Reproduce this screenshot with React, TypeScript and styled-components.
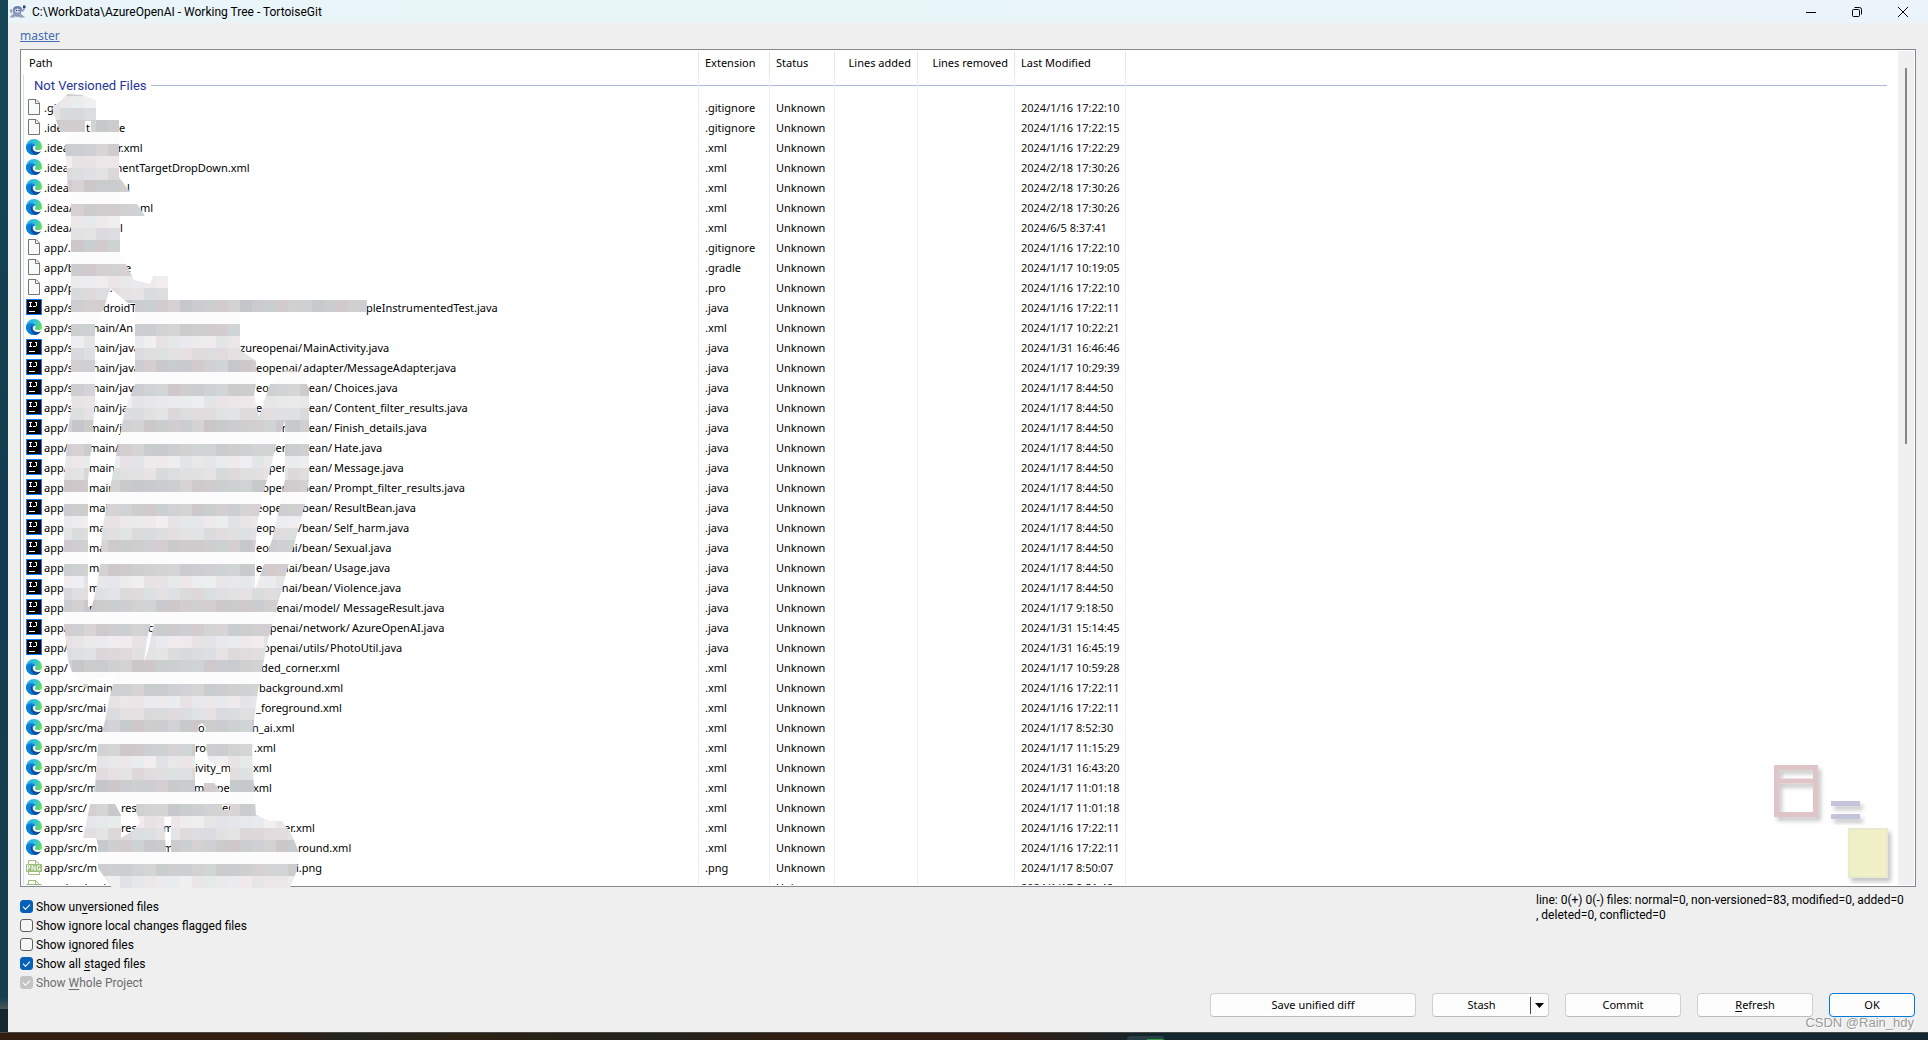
import React from 'react';
import styled, { createGlobalStyle } from 'styled-components';

const UI_FONT = '"Noto Sans", "Open Sans", sans-serif';
const LABEL_FONT = 'Roboto, "Noto Sans", sans-serif';

const GlobalStyle = createGlobalStyle`
  *, *::before, *::after { box-sizing: border-box; }
  html, body { margin: 0; padding: 0; }
  body { font-family: ${UI_FONT}; font-size: 11px; color: #000; }
`;

const Desktop = styled.div`
  min-height: 100vh;
  height: 100vh;
  padding-left: 8px;
  display: flex;
  flex-direction: column;
  background: linear-gradient(#174558 0%, #123c4e 50%, #173f50 96%, #4b5558 97%, #14272f 97%);
`;

const Dialog = styled.main`
  position: relative;
  flex: 1;
  min-height: 0;
  display: flex;
  flex-direction: column;
  background: #efefef;
`;

const TitleBar = styled.header`
  flex: none;
  height: 23px;
  padding: 0 2px;
  display: flex;
  align-items: center;
  background: linear-gradient(90deg, #eaf4f9, #e8f6f7 30%, #eaf4fa);
`;

const Title = styled.h1`
  flex: 1;
  margin: 0 0 0 6px;
  font-family: ${LABEL_FONT};
  font-size: 12px;
  line-height: 20px;
  font-weight: 400;
`;

const WindowButton = styled.button`
  width: 46px;
  height: 20px;
  padding: 0;
  border: 0;
  background: transparent;
  display: grid;
  place-items: center;
`;

const BranchBar = styled.nav`
  flex: none;
  height: 26px;
  padding: 0 12px;
  display: flex;
  align-items: center;
`;

const BranchLink = styled.a`
  font-size: 12px;
  line-height: 20px;
  color: #426eb4;
  text-decoration: underline;
`;

const ListFrame = styled.section`
  position: relative;
  flex: 1;
  min-height: 0;
  margin: 0 12px;
  padding: 1px 1px 1px 2px;
  display: flex;
  border: 1px solid #828790;
  background: #fff;
`;

const ListView = styled.div`
  flex: 1;
  min-width: 0;
  overflow: hidden;
`;

const FileTable = styled.table`
  width: 100%;
  table-layout: fixed;
  border-collapse: separate;
  border-spacing: 0;
  th, td { padding: 0; font-weight: 400; text-align: left; }
`;

const Col = styled.col<{ $w?: number }>`
  width: ${p => (p.$w ? `${p.$w}px` : 'auto')};
`;

const HeadCell = styled.th<{ $right?: boolean; $last?: boolean }>`
  && {
    height: 24px;
    padding: 0 6px;
    font-size: 11px;
    line-height: 20px;
    text-align: ${p => (p.$right ? 'right' : 'left')};
    border-right: ${p => (p.$last ? '0' : '1px solid #e5e5e5')};
  }
`;

const Cell = styled.td<{ $first?: boolean; $last?: boolean }>`
  border-left: ${p => (p.$first ? '1px solid #cfe0f7' : '0')};
  border-right: ${p => (p.$last ? '0' : '1px solid #e9f2fc')};
`;

const CellText = styled.div`
  height: 20px;
  padding-left: 6px;
  line-height: 20px;
  white-space: nowrap;
`;

const DateText = styled(CellText)`
  font-family: "Open Sans", "Noto Sans", sans-serif;
`;

const PathText = styled(CellText)`
  padding-left: 2px;
  display: flex;
  align-items: center;
  gap: 2px;
  > svg { margin-bottom: 2px; }
`;

const Piece = styled.span<{ $w: number }>`
  flex: none;
  width: ${p => (p.$w ? `${p.$w}px` : 'auto')};
`;

const Pieces = styled.span`
  display: flex;
`;

const GroupCell = styled.div<{ $first?: boolean; $last?: boolean }>`
  height: 23px;
  padding: 0 ${p => (p.$last ? '11px' : '0')} 2px ${p => (p.$first ? '10px' : '0')};
  display: flex;
  align-items: center;
  gap: 4px;
`;

const GroupLabel = styled.span`
  font-family: ${LABEL_FONT};
  font-size: 13px;
  line-height: 20px;
  color: #26349a;
`;

const Rule = styled.span`
  flex: 1;
  height: 1px;
  background: #acbbda;
`;

const ScrollTrack = styled.div`
  flex: none;
  width: 16px;
  padding: 17px 7px 0;
  background: #f0f0f0;
`;

const ScrollThumb = styled.div`
  height: 46%;
  width: 2px;
  background: #858585;
`;

const Redaction = styled.svg`
  position: absolute;
  left: 27px;
  top: 42px;
  pointer-events: none;
`;

const CornerArt = styled.svg`
  position: absolute;
  right: 21px;
  bottom: 2px;
  pointer-events: none;
`;

const Footer = styled.footer`
  flex: none;
  padding: 6px 13px 15px 12px;
`;

const Options = styled.div`
  display: flex;
  justify-content: space-between;
  align-items: flex-start;
`;

const CheckList = styled.div`
  padding: 4px 0 1px;
`;

const Option = styled.label<{ $off?: boolean }>`
  height: 19px;
  display: flex;
  align-items: center;
  gap: 3px;
  font-family: ${LABEL_FONT};
  font-size: 12px;
  line-height: 18px;
  color: ${p => (p.$off ? '#6d6d6d' : '#000')};
`;

const Check = styled.input`
  appearance: none;
  width: 13px;
  height: 13px;
  margin: 0;
  display: grid;
  place-items: center;
  border: 1px solid #5f5f5f;
  border-radius: 3px;
  background: #f5f5f5;
  &:checked { background: #0560b8; border-color: #0560b8; }
  &:disabled { background: #c4c4c4; border-color: #c4c4c4; }
  &:checked::after {
    content: '';
    width: 7px;
    height: 4px;
    border: solid #fff;
    border-width: 0 0 1px 1px;
    transform: translateY(-1px) rotate(-45deg);
  }
`;

const Key = styled.u`
  text-underline-offset: 2px;
`;

const Summary = styled.p`
  margin: 0;
  width: 379px;
  font-family: ${LABEL_FONT};
  font-size: 12px;
  line-height: 15px;
  white-space: nowrap;
`;

const Actions = styled.div`
  display: flex;
  justify-content: flex-end;
  gap: 16px;
`;

const Button = styled.button<{ $w: number; $primary?: boolean }>`
  width: ${p => p.$w}px;
  height: 24px;
  padding: 0;
  font-family: ${UI_FONT};
  font-size: 11px;
  line-height: 20px;
  color: #000;
  background: #fdfdfd;
  border: 1px solid ${p => (p.$primary ? '#0078d4' : '#d0d0d0')};
  border-bottom-color: ${p => (p.$primary ? '#0078d4' : '#bbb')};
  border-radius: 4px;
`;

const SplitButton = styled.div`
  display: flex;
  height: 24px;
  background: #fdfdfd;
  border: 1px solid #d0d0d0;
  border-bottom-color: #bbb;
  border-radius: 4px;
  align-items: center;
`;

const SplitPart = styled.button<{ $w: number; $divided?: boolean }>`
  width: ${p => p.$w}px;
  height: 17px;
  padding: 0;
  display: grid;
  place-items: center;
  border: 0;
  border-left: ${p => (p.$divided ? '1px solid #444' : '0')};
  background: transparent;
  font-family: ${UI_FONT};
  font-size: 11px;
  line-height: 16px;
  color: #000;
`;

const Credit = styled.span`
  position: absolute;
  right: 14px;
  bottom: 0;
  font-family: "Liberation Sans", Arial, sans-serif;
  font-size: 13px;
  line-height: 18px;
  color: #999;
  text-shadow: 1px 1px 0 #fff;
`;

const Taskbar = styled.div`
  flex: none;
  height: 8px;
  margin-left: -8px;
  display: flex;
  justify-content: center;
  align-items: flex-end;
  border-top: 1px solid #4a4a48;
  background: linear-gradient(90deg, #331c10 0%, #331c10 14%, #22241f 18%, #2c2114 24%, #22221c 34%, #331c10 42%, #331c12 52%, #12262e 60%, #11262f 100%);
`;

const TaskItem = styled.span`
  width: 38px;
  height: 4px;
  margin-left: 363px;
  padding: 3px 2px 0 20px;
  border-radius: 4px 4px 0 0;
  background: #2a3d45;
  &::after { content: ''; display: block; height: 1px; background: #27a33b; }
`;

type Kind = 'doc' | 'edge' | 'ij' | 'png';
type Part = [number, string];
type FileRow = { kind: Kind; parts: Part[]; ext: string; date: string };

const PATH_START = 44;

const row = (kind: Kind, ext: string, date: string, first: string, ...rest: Part[]): FileRow => ({
  kind,
  ext,
  date,
  parts: [[PATH_START, first], ...rest],
});

const bean = (first: string, second: string, name: string): FileRow =>
  row('ij', '.java', '2024/1/17 8:44:50', first, [89, second], [256, 'eopenai/'], [302, 'bean/'], [334, name]);

const files: FileRow[] = [
  row('doc', '.gitignore', '2024/1/16 17:22:10', '.git'),
  row('doc', '.gitignore', '2024/1/16 17:22:15', '.idea', [86, 't'], [119, 'e']),
  row('edge', '.xml', '2024/1/16 17:22:29', '.idea', [118, 'r.xml']),
  row('edge', '.xml', '2024/2/18 17:30:26', '.idea/', [112, 'mentTargetDropDown.xml']),
  row('edge', '.xml', '2024/2/18 17:30:26', '.idea/', [127, 'l']),
  row('edge', '.xml', '2024/2/18 17:30:26', '.idea/', [140, 'ml']),
  row('edge', '.xml', '2024/6/5 8:37:41', '.idea/', [120, 'l']),
  row('doc', '.gitignore', '2024/1/16 17:22:10', 'app/.'),
  row('doc', '.gradle', '2024/1/17 10:19:05', 'app/b', [125, 'e']),
  row('doc', '.pro', '2024/1/16 17:22:10', 'app/p', [107, 'r.']),
  row('ij', '.java', '2024/1/16 17:22:11', 'app/s', [103, 'droidT'], [366, 'pleInstrumentedTest.java']),
  row('edge', '.xml', '2024/1/17 10:22:21', 'app/s', [89, 'main/An']),
  row('ij', '.java', '2024/1/31 16:46:46', 'app/s', [89, 'main/java'], [240, 'zureopenai/'], [303, 'MainActivity.java']),
  row('ij', '.java', '2024/1/17 10:29:39', 'app/s', [89, 'main/java'], [256, 'eopenai/'], [303, 'adapter/'], [347, 'MessageAdapter.java']),
  bean('app/s', 'main/java', 'Choices.java'),
  bean('app/s', 'main/ja', 'Content_filter_results.java'),
  bean('app/', 'main/j', 'Finish_details.java'),
  bean('app/', 'main/', 'Hate.java'),
  bean('app/', 'main', 'Message.java'),
  bean('app/', 'main', 'Prompt_filter_results.java'),
  bean('app/', 'mai', 'ResultBean.java'),
  bean('app/', 'ma', 'Self_harm.java'),
  bean('app/', 'ma', 'Sexual.java'),
  bean('app/', 'ma', 'Usage.java'),
  bean('app/', 'm', 'Violence.java'),
  row('ij', '.java', '2024/1/17 9:18:50', 'app/', [89, 'm'], [263, 'openai/'], [303, 'model/'], [343, 'MessageResult.java']),
  row('ij', '.java', '2024/1/31 15:14:45', 'app/', [148, 'c'], [263, 'openai/'], [303, 'network/'], [352, 'AzureOpenAI.java']),
  row('ij', '.java', '2024/1/31 16:45:19', 'app/', [263, 'openai/'], [303, 'utils/'], [330, 'PhotoUtil.java']),
  row('edge', '.xml', '2024/1/17 10:59:28', 'app/', [261, 'ded_corner.xml']),
  row('edge', '.xml', '2024/1/16 17:22:11', 'app/src/main', [259, 'background.xml']),
  row('edge', '.xml', '2024/1/16 17:22:11', 'app/src/mai', [256, '_foreground.xml']),
  row('edge', '.xml', '2024/1/17 8:52:30', 'app/src/ma', [198, 'o'], [252, 'n_ai.xml']),
  row('edge', '.xml', '2024/1/17 11:15:29', 'app/src/m', [195, 'rou'], [254, '.xml']),
  row('edge', '.xml', '2024/1/31 16:43:20', 'app/src/m', [195, 'ivity_m'], [253, 'xml']),
  row('edge', '.xml', '2024/1/17 11:01:18', 'app/src/m', [194, 'm'], [210, 'open'], [253, 'xml']),
  row('edge', '.xml', '2024/1/17 11:01:18', 'app/src/', [121, 'res'], [222, 'er']),
  row('edge', '.xml', '2024/1/16 17:22:11', 'app/src', [121, 'res/'], [163, 'm'], [284, 'er.xml']),
  row('edge', '.xml', '2024/1/16 17:22:11', 'app/src/m', [163, 'm'], [298, 'round.xml']),
  row('png', '.png', '2024/1/17 8:50:07', 'app/src/m', [296, 'i.png']),
  row('png', '.png', '2024/1/17 8:51:42', 'app/src/main/res/mipmap-hdpi'),
];

const FileIcon = ({ kind }: { kind: Kind }) => {
  if (kind === 'doc') {
    return (
      <svg width="16" height="16" viewBox="0 0 16 16" aria-hidden="true">
        <path d="M2.500 .5H10L13.500 4V15.500H2.500Z" fill="#fafafa" stroke="#777" />
        <path d="M9.500 .5V4.500H13.500" fill="none" stroke="#777" />
      </svg>
    );
  }
  if (kind === 'edge') {
    return (
      <svg width="16" height="16" viewBox="0 0 16 16" aria-hidden="true">
        <defs>
          <linearGradient id="edgeTop" x1="0" y1="0" x2="1" y2=".5">
            <stop offset="0" stopColor="#29a8e6" />
            <stop offset=".5" stopColor="#2fc2df" />
            <stop offset="1" stopColor="#6be04e" />
          </linearGradient>
        </defs>
        <circle cx="8" cy="8" r="8" fill="url(#edgeTop)" />
        <path d="M0 8C.2 5.4 3 4.2 5.2 4.3C8 4.4 9.6 6.2 9.6 8C9 7 7.400 7 6.800 8.600C6.200 11 8.600 13.200 11.500 13.100C13 13 14 12.500 14.800 12.200C13.400 14.700 10.800 16 8 16C3.600 16 0 12.500 0 8Z" fill="#0a7fd9" />
        <path d="M5.600 6.800C3.500 9.500 5 14.500 9.200 15.900C11.800 15.600 13.800 14.100 14.800 12.200C11.500 14 6.300 12.400 6.800 8.600Z" fill="#114f9c" />
        <path d="M9.300 6.800C10.300 8.400 8.900 9 9 9.800C9.200 11.300 13.600 11.700 15.600 9.900C15.500 11 15.200 11.700 14.800 12.200C11.500 14 6.700 12.200 6.800 9C6.900 7.600 8 6.600 9.300 6.800Z" fill="#fff" />
      </svg>
    );
  }
  if (kind === 'ij') {
    return (
      <svg width="16" height="16" viewBox="0 0 16 16" aria-hidden="true">
        <rect x=".5" y=".5" width="15" height="15" fill="#000" stroke="#0a7bf2" />
        <path d="M3 3.500H6M4.500 3V8M3 7.500H6M9 3.500H11M10.500 3V7M7 7.500H10M3 12.500H9" fill="none" stroke="#fff" />
      </svg>
    );
  }
  return (
    <svg width="16" height="16" viewBox="0 0 16 16" aria-hidden="true">
      <path d="M2.500 5V1.500H9.500L13.500 5.500M9.500 1.500V5.500H13.500M2.500 12V15.500H13.500V12" fill="none" stroke="#9dbf7c" />
      <rect x="0" y="5" width="16" height="8" rx="1" fill="#9dbf7c" />
      <path d="M1.500 11.500V6.500H3.500V9H1.500M6 11.500V6.500L9 11.500V6.500M14 7Q11 6 11 9Q11 11.500 14 11V9.500H13" fill="none" stroke="#fff" />
    </svg>
  );
};

const CELL = 12;
const ORIGIN_X = 48;
const ORIGIN_Y = 92;
const BANDS = [206, 252, 208, 234, 223];
const TINTS = [
  [0, 0, 0], [2, -3, -2], [-2, 1, 2], [4, 0, 1], [-4, -3, 0], [1, 1, 1], [3, -4, -1], [-3, 0, 1], [0, -1, 3],
];

const mosaicCells = () => {
  const cells: { x: number; y: number; fill: string }[] = [];
  for (let gy = 7; gy < 75; gy++) {
    for (let gx = 4; gx < 31; gx++) {
      const band = BANDS[(gy + 5) % 5];
      const seed = (gx * 37 + gy * 11 + ((gx * gy) % 7) * 5) % TINTS.length;
      const shift = band > 250 ? 0 : ((gx * 13 + gy * 5) % 11) - 5;
      const scale = band > 250 ? 0 : 1;
      const rgb = TINTS[seed].map(t => Math.min(254, band + shift + t * scale));
      cells.push({ x: gx * CELL, y: gy * CELL, fill: `rgb(${rgb.join(',')})` });
    }
  }
  return cells;
};

const OUTLINE =
  'M68 94L82 95L96 100V120H119V177L130 192H120V204H137L145 216H120V252L125 262L134 280L150 284L153 276H168V300H367V312H240V350L256 361V384L254 395L259 417L270 384L285 370L303 372L309 390V480L306 500L290 560L276 610L268 640L263 665L258 690L254 720L252 750L254 785L256 815L270 821H282L292 835L298 850L297 870L290 888H112L98 868V845L96 838H83L90 805L95 785L98 745L104 725L109 700L115 675L90 680L86 688L72 672L68 660L64 625V480L68 430L71 410V192H68L65 144L72 132H60L52 108Z';
const GAPS = [
  'M85 121H91V132H85Z',
  'M110 288L128 303H135V384L125 410L117 450L108 500L102 530L101 560L96 590L91 610L88 606V480L92 440L95 400V324L104 308Z',
  'M285 421V480L280 505L272 540L262 570L255 590V550L258 520L264 490L270 470L276 445Z',
  'M152 619L154 624L148 650L144 662L148 634Z',
  'M198 726L202 723L206 728L204 734H198Z',
  'M195 742H206L208 760L216 766H230V793H222L214 783H204V791H195Z',
  'M115 804H136V812L140 822L134 830L121 838V815Z',
  'M222 805H230V810H222Z',
  'M164 817H171V852H166Z',
];

const Mosaic = () => (
  <Redaction width="320" height="796" viewBox={`${ORIGIN_X} ${ORIGIN_Y} 320 796`} aria-hidden="true">
    <clipPath id="smudge">
      <path d={OUTLINE + GAPS.join('')} clipRule="evenodd" />
    </clipPath>
    <g clipPath="url(#smudge)" shapeRendering="crispEdges">
      {mosaicCells().map(c => (
        <rect key={`${c.x}-${c.y}`} x={c.x} y={c.y} width={CELL} height={CELL} fill={c.fill} />
      ))}
    </g>
  </Redaction>
);

const Art = () => (
  <CornerArt width="122" height="122" viewBox="0 0 122 122" aria-hidden="true">
    <defs>
      <filter id="soft" x="-20%" y="-20%" width="150%" height="150%">
        <feDropShadow dx="3" dy="4" stdDeviation="2" floodColor="#000" floodOpacity=".22" />
      </filter>
      <linearGradient id="note">
        <stop offset="0" stopColor="#edf1c8" />
        <stop offset="1" stopColor="#f4efc6" />
      </linearGradient>
    </defs>
    <g filter="url(#soft)">
      <path d="M4.500 5.500H43.500V52.500H4.500ZM4.500 19H43.500" fill="none" stroke="#dfc4c8" strokeWidth="5" />
    </g>
    <g filter="url(#soft)" fill="#c3c4d9">
      <rect x="59" y="39" width="29" height="5" />
      <rect x="59" y="52" width="29" height="5" />
    </g>
    <rect x="77" y="67" width="38" height="48" fill="url(#note)" stroke="#e9eacb" strokeWidth="2" filter="url(#soft)" />
  </CornerArt>
);

const TortoiseIcon = () => (
  <svg width="16" height="16" viewBox="0 0 16 16" aria-hidden="true">
    <path d="M2 5.500L.5 7L2 8.500M12 7.500L14 5V3M4 10.500L1.500 12.500H4.500M10 10.500L12.500 12.500H9" fill="none" stroke="#93a0bb" strokeWidth="2" />
    <ellipse cx="7" cy="8.500" rx="4" ry="4.500" fill="#8e9ab8" />
    <ellipse cx="7.500" cy="5.500" rx="4.500" ry="3.500" fill="#6b7fb4" />
    <path d="M4.500 6Q7.500 3 10.500 6L9.500 8.500H5.500Z" fill="#e4e9f5" />
    <circle cx="6.500" cy="6.500" r=".8" fill="#26325c" />
    <circle cx="9" cy="6.500" r=".8" fill="#26325c" />
    <rect x="13" y="1.500" width="2.500" height="2.500" fill="#1d4470" />
  </svg>
);

const PathPieces = ({ parts }: { parts: Part[] }) => (
  <Pieces>
    {parts.map(([x, text], i) => (
      <Piece key={x} $w={i + 1 < parts.length ? parts[i + 1][0] - x : 0}>{text}</Piece>
    ))}
  </Pieces>
);

export default function App() {
  return (
    <>
      <GlobalStyle />
      <Desktop>
        <Dialog>
          <TitleBar>
            <TortoiseIcon />
            <Title>C:\WorkData\AzureOpenAI - Working Tree - TortoiseGit</Title>
            <WindowButton aria-label="Minimize">
              <svg width="10" height="10" viewBox="0 0 10 10"><path d="M0 5.500H10" stroke="#000" /></svg>
            </WindowButton>
            <WindowButton aria-label="Restore">
              <svg width="10" height="10" viewBox="0 0 10 10">
                <rect x=".5" y="2.500" width="7" height="7" rx="1" fill="none" stroke="#000" />
                <path d="M2.500 .5H7.500Q9.500 .5 9.500 2.500V7.500" fill="none" stroke="#000" />
              </svg>
            </WindowButton>
            <WindowButton aria-label="Close">
              <svg width="10" height="10" viewBox="0 0 10 10"><path d="M0 0L10 10M10 0L0 10" stroke="#000" /></svg>
            </WindowButton>
          </TitleBar>

          <BranchBar>
            <BranchLink href="#master">master</BranchLink>
          </BranchBar>

          <ListFrame>
            <ListView>
              <FileTable>
                <colgroup>
                  <Col $w={676} />
                  <Col $w={71} />
                  <Col $w={65} />
                  <Col $w={83} />
                  <Col $w={97} />
                  <Col $w={111} />
                  <Col />
                </colgroup>
                <thead>
                  <tr>
                    <HeadCell>Path</HeadCell>
                    <HeadCell>Extension</HeadCell>
                    <HeadCell>Status</HeadCell>
                    <HeadCell $right>Lines added</HeadCell>
                    <HeadCell $right>Lines removed</HeadCell>
                    <HeadCell>Last Modified</HeadCell>
                    <HeadCell $last />
                  </tr>
                </thead>
                <tbody>
                  <tr>
                    <Cell $first>
                      <GroupCell $first>
                        <GroupLabel>Not Versioned Files</GroupLabel>
                        <Rule />
                      </GroupCell>
                    </Cell>
                    {[0, 1, 2, 3, 4].map(i => (
                      <Cell key={i}><GroupCell><Rule /></GroupCell></Cell>
                    ))}
                    <Cell $last><GroupCell $last><Rule /></GroupCell></Cell>
                  </tr>
                  {files.map((f, i) => (
                    <tr key={i}>
                      <Cell $first>
                        <PathText>
                          <FileIcon kind={f.kind} />
                          <PathPieces parts={f.parts} />
                        </PathText>
                      </Cell>
                      <Cell><CellText>{f.ext}</CellText></Cell>
                      <Cell><CellText>Unknown</CellText></Cell>
                      <Cell />
                      <Cell />
                      <Cell><DateText>{f.date}</DateText></Cell>
                      <Cell $last />
                    </tr>
                  ))}
                </tbody>
              </FileTable>
            </ListView>
            <ScrollTrack><ScrollThumb /></ScrollTrack>
            <Mosaic />
            <Art />
          </ListFrame>

          <Footer>
            <Options>
              <CheckList>
                <Option><Check type="checkbox" defaultChecked /><span>Show un<Key>v</Key>ersioned files</span></Option>
                <Option><Check type="checkbox" /><span>Show ignore local changes flagged files</span></Option>
                <Option><Check type="checkbox" /><span>Show i<Key>g</Key>nored files</span></Option>
                <Option><Check type="checkbox" defaultChecked /><span>Show all <Key>s</Key>taged files</span></Option>
                <Option $off><Check type="checkbox" defaultChecked disabled /><span>Show <Key>W</Key>hole Project</span></Option>
              </CheckList>
              <Summary>
                line: 0(+) 0(-) files: normal=0, non-versioned=83, modified=0, added=0<br />, deleted=0, conflicted=0
              </Summary>
            </Options>
            <Actions>
              <Button $w={206}>Save unified diff</Button>
              <SplitButton>
                <SplitPart $w={97}>Stash</SplitPart>
                <SplitPart $w={18} $divided aria-label="Stash options">
                  <svg width="9" height="5" viewBox="0 0 9 5"><path d="M0 0H9L4.500 5Z" /></svg>
                </SplitPart>
              </SplitButton>
              <Button $w={116}>Commit</Button>
              <Button $w={116}><Key>R</Key>efresh</Button>
              <Button $w={86} $primary>OK</Button>
            </Actions>
          </Footer>
          <Credit>CSDN @Rain_hdy</Credit>
        </Dialog>
        <Taskbar><TaskItem /></Taskbar>
      </Desktop>
    </>
  );
}
